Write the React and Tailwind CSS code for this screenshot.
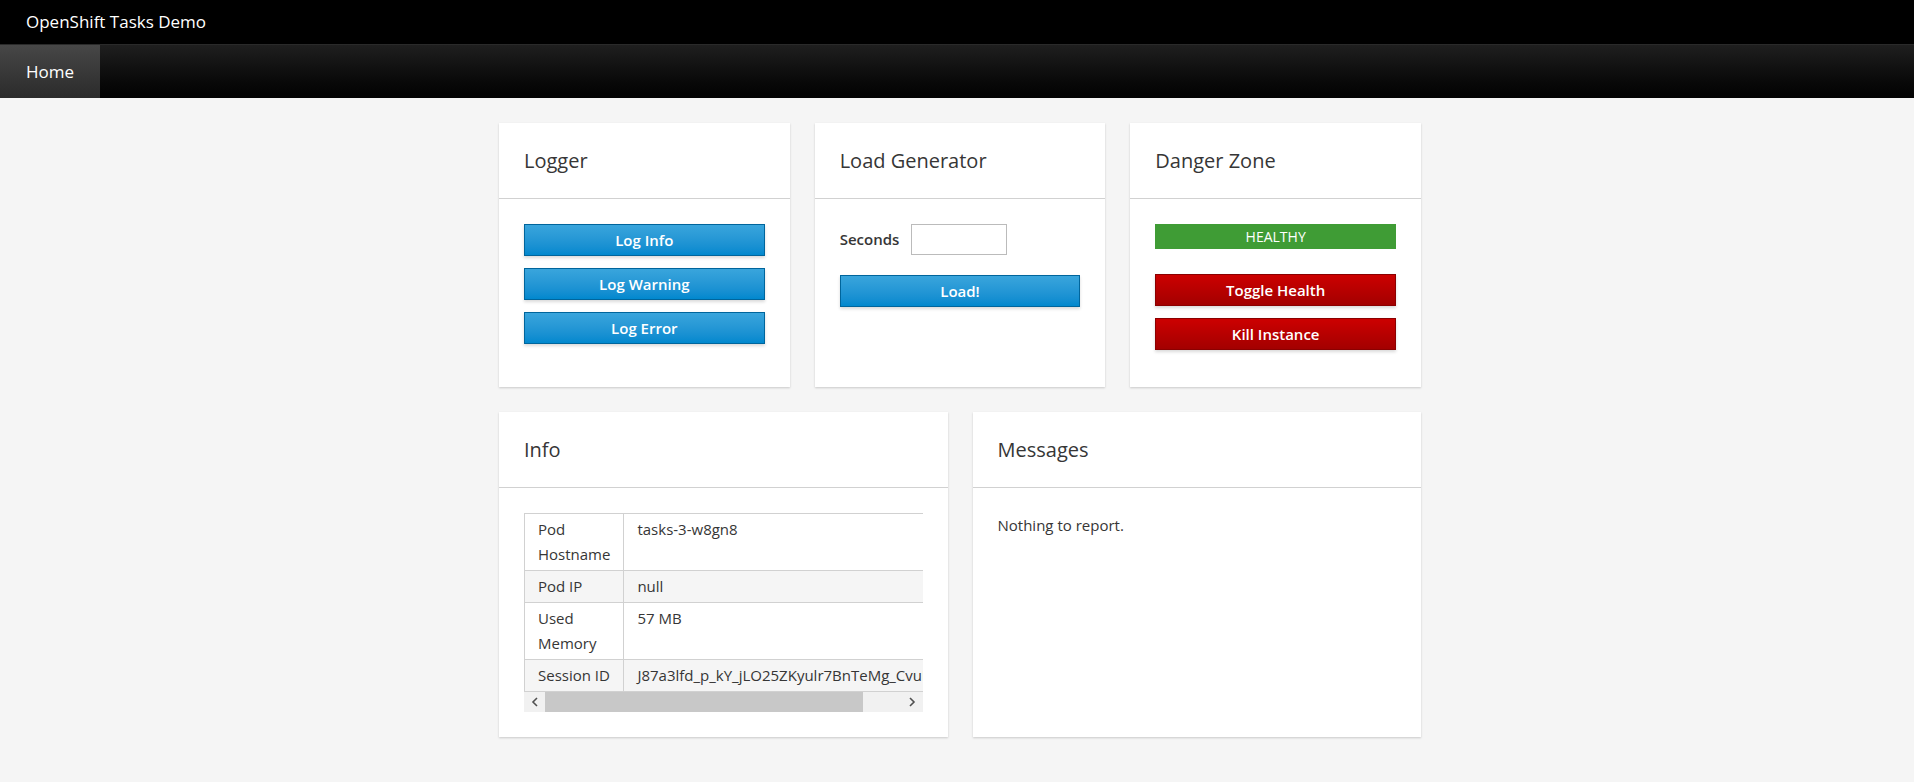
import React from 'react';

function Card({ title, children, className = '' }) {
  return (
    <div className={`bg-white shadow-[0_1px_2px_rgba(0,0,0,0.18)] flex flex-col ${className}`}>
      <div className="h-[76px] flex items-center px-[25px] border-b border-[#d1d1d1] shrink-0">
        <h2 className="text-[20px] text-[#363636] font-normal">{title}</h2>
      </div>
      <div className="px-[25px] pt-[25px] pb-[25px] flex-1">{children}</div>
    </div>
  );
}

function BlueButton({ children }) {
  return (
    <button className="w-full h-[32px] border border-[#00659c] bg-linear-to-b from-[#39a5dc] to-[#0088ce] text-white text-[15px] font-semibold shadow-[0_2px_3px_rgba(0,0,0,0.15)]">
      {children}
    </button>
  );
}

function RedButton({ children }) {
  return (
    <button className="w-full h-[32px] border border-[#8b0000] bg-linear-to-b from-[#cc0000] to-[#a30000] text-white text-[15px] font-semibold shadow-[0_2px_3px_rgba(0,0,0,0.15)]">
      {children}
    </button>
  );
}

const rows = [
  { k: 'Pod Hostname', v: 'tasks-3-w8gn8' },
  { k: 'Pod\u00a0IP', v: 'null' },
  { k: 'Used Memory', v: '57 MB' },
  { k: 'Session\u00a0ID', v: 'J87a3lfd_p_kY_jLO25ZKyulr7BnTeMg_CvuIq3Hs9' },
];

function Chevron({ dir }) {
  return (
    <svg width="8" height="10" viewBox="0 0 8 10" fill="none">
      {dir === 'left' ? (
        <polyline points="6,1 2,5 6,9" stroke="#505050" strokeWidth="1.6" />
      ) : (
        <polyline points="2,1 6,5 2,9" stroke="#505050" strokeWidth="1.6" />
      )}
    </svg>
  );
}

export default function App() {
  return (
    <div className="min-h-screen bg-[#f5f5f5] font-['Open_Sans',sans-serif] text-[#363636]">
      <div className="h-[44px] bg-black flex items-center px-[26px]">
        <span className="text-white text-[17px]">OpenShift Tasks Demo</span>
      </div>
      <div className="h-[54px] bg-linear-to-b from-[#1f1f1f] to-[#030303] border-t border-[#2a2a2a] flex">
        <div className="h-full px-[26px] flex items-center bg-linear-to-b from-[#474747] to-[#2b2b2b] text-white text-[17px]">
          Home
        </div>
      </div>

      <div className="w-[928px] mx-auto pl-[6px] pt-[25px] pb-[44px] flex flex-col gap-[25px]">
        <div className="grid grid-cols-3 gap-[25px]">
          <Card title="Logger" className="h-[264px]">
            <div className="flex flex-col gap-[12px]">
              <BlueButton>Log Info</BlueButton>
              <BlueButton>Log Warning</BlueButton>
              <BlueButton>Log Error</BlueButton>
            </div>
          </Card>
          <Card title="Load Generator" className="h-[264px]">
            <div className="flex items-center gap-[12px]">
              <label className="text-[15px] font-semibold">Seconds</label>
              <input className="w-[96px] h-[31px] border border-[#bbbbbb] bg-white outline-none" />
            </div>
            <div className="mt-[20px]">
              <BlueButton>Load!</BlueButton>
            </div>
          </Card>
          <Card title="Danger Zone" className="h-[264px]">
            <div className="h-[25px] bg-[#3f9c35] text-white text-[14px] flex items-center justify-center uppercase">
              Healthy
            </div>
            <div className="mt-[25px] flex flex-col gap-[12px]">
              <RedButton>Toggle Health</RedButton>
              <RedButton>Kill Instance</RedButton>
            </div>
          </Card>
        </div>

        <div className="grid grid-cols-2 gap-[25px]">
          <Card title="Info">
            <div className="overflow-hidden">
              <table className="border-collapse text-[15px] leading-[25px]">
                <tbody>
                  {rows.map((r, i) => (
                    <tr key={r.k} className={i % 2 === 1 ? 'bg-[#f5f5f5]' : 'bg-white'}>
                      <td className="border border-[#d1d1d1] px-[13px] py-[3px] w-[98px] align-top">
                        {r.k}
                      </td>
                      <td className="border border-[#d1d1d1] px-[13px] py-[3px] whitespace-nowrap align-top">
                        {r.v}
                      </td>
                    </tr>
                  ))}
                </tbody>
              </table>
            </div>
            <div className="h-[20px] bg-[#f1f1f1] flex items-center">
              <div className="w-[21px] h-full flex items-center justify-center">
                <Chevron dir="left" />
              </div>
              <div className="w-[318px] h-full bg-[#c8c8c8]" />
              <div className="flex-1" />
              <div className="w-[21px] h-full flex items-center justify-center">
                <Chevron dir="right" />
              </div>
            </div>
          </Card>
          <Card title="Messages">
            <p className="text-[15px] leading-[26px] -mt-[1px]">Nothing to report.</p>
          </Card>
        </div>
      </div>
    </div>
  );
}
